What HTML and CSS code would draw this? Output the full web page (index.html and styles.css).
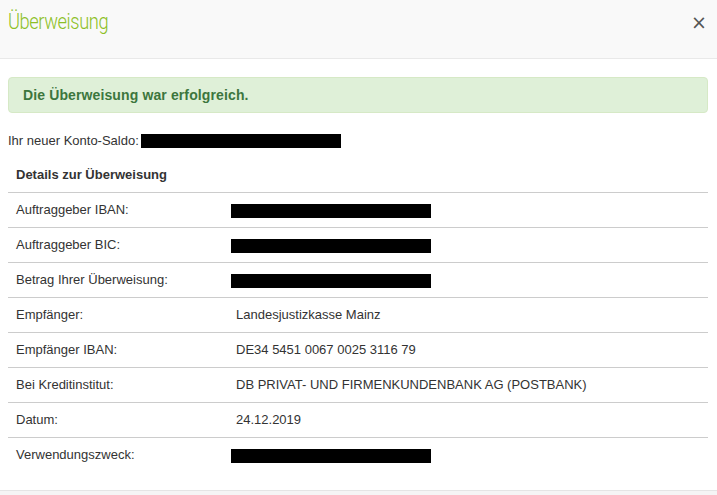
FILE: index.html
```html
<!DOCTYPE html>
<html lang="de">
<head>
    <meta charset="UTF-8">
    <meta name="viewport" content="width=device-width, initial-scale=1.0">
    <title>Überweisung</title>
    <link rel="stylesheet" href="styles.css">
</head>
<body>
    <div class="modal">
        <div class="modal-header">
            <h4 class="modal-title">Überweisung</h4>
            <button class="close" type="button">&times;</button>
        </div>

        <div class="modal-body">
            <div class="alert-success">Die Überweisung war erfolgreich.</div>

            <p class="saldo">Ihr neuer Konto-Saldo: <span class="redacted"></span></p>

            <table class="details">
                <thead>
                    <tr><th colspan="2">Details zur Überweisung</th></tr>
                </thead>
                <tbody>
                    <tr>
                        <td class="label">Auftraggeber IBAN:</td>
                        <td class="hidden-value"><span class="redacted"></span></td>
                    </tr>
                    <tr>
                        <td class="label">Auftraggeber BIC:</td>
                        <td class="hidden-value"><span class="redacted"></span></td>
                    </tr>
                    <tr>
                        <td class="label">Betrag Ihrer Überweisung:</td>
                        <td class="hidden-value"><span class="redacted"></span></td>
                    </tr>
                    <tr>
                        <td class="label">Empfänger:</td>
                        <td>Landesjustizkasse Mainz</td>
                    </tr>
                    <tr>
                        <td class="label">Empfänger IBAN:</td>
                        <td>DE34 5451 0067 0025 3116 79</td>
                    </tr>
                    <tr>
                        <td class="label">Bei Kreditinstitut:</td>
                        <td>DB PRIVAT- UND FIRMENKUNDENBANK AG (POSTBANK)</td>
                    </tr>
                    <tr>
                        <td class="label">Datum:</td>
                        <td>24.12.2019</td>
                    </tr>
                    <tr class="last">
                        <td class="label">Verwendungszweck:</td>
                        <td class="hidden-value"><span class="redacted"></span></td>
                    </tr>
                </tbody>
            </table>
        </div>

        <div class="modal-footer"></div>
    </div>
</body>
</html>
```

FILE: styles.css
```css
body {
    margin: 0;
    font-family: 'Liberation Sans', Arial, sans-serif;
    font-size: 13px;
    line-height: 18px;
    color: #333;
    background: #fff;
}
.modal-header {
    display: flex;
    justify-content: space-between;
    align-items: flex-start;
    height: 58px;
    padding: 0 8px;
    background: #f9f9f9;
    border-bottom: 1px solid #e9e9e9;
}
.modal-title {
    margin: 9px 0 0;
    font-family: Roboto, 'Liberation Sans', sans-serif;
    font-weight: 300;
    font-size: 22px;
    line-height: 26px;
    letter-spacing: -0.5px;
    color: #8cbf26;
    transform: scaleX(0.83);
    transform-origin: left center;
}
.close {
    margin: 9px 2px 0 0;
    padding: 0;
    border: none;
    background: none;
    font-family: 'DejaVu Sans', sans-serif;
    font-size: 19px;
    font-weight: normal;
    line-height: 26px;
    color: #555;
    cursor: pointer;
}
.modal-body {
    padding: 18px 9px 0 8px;
}
.alert-success {
    padding: 9px 14px;
    font-size: 14px;
    font-weight: bold;
    line-height: 16px;
    letter-spacing: 0.12px;
    color: #3c763d;
    background: #dff0d8;
    border: 1px solid #d6e9c6;
    border-radius: 4px;
}
.saldo {
    margin: 19px 0 0;
    display: flex;
    align-items: center;
    gap: 2px;
}
.redacted {
    display: inline-block;
    width: 200px;
    height: 14px;
    background: #000;
    vertical-align: middle;
}
.details {
    width: 100%;
    margin: 8px 0 18px;
    border-collapse: collapse;
}
.details th {
    padding: 8px;
    text-align: left;
    font-weight: bold;
    border-bottom: 1px solid #ccc;
}
.details td {
    padding: 8px;
    border-bottom: 1px solid #ccc;
    vertical-align: middle;
}
.details td.label {
    width: 204px;
}
.details td.hidden-value {
    padding-left: 3px;
}
.details tr.last td {
    border-bottom: none;
}
.modal-footer {
    height: 10px;
    background: #f5f5f5;
    border-top: 1px solid #e5e5e5;
}
```
